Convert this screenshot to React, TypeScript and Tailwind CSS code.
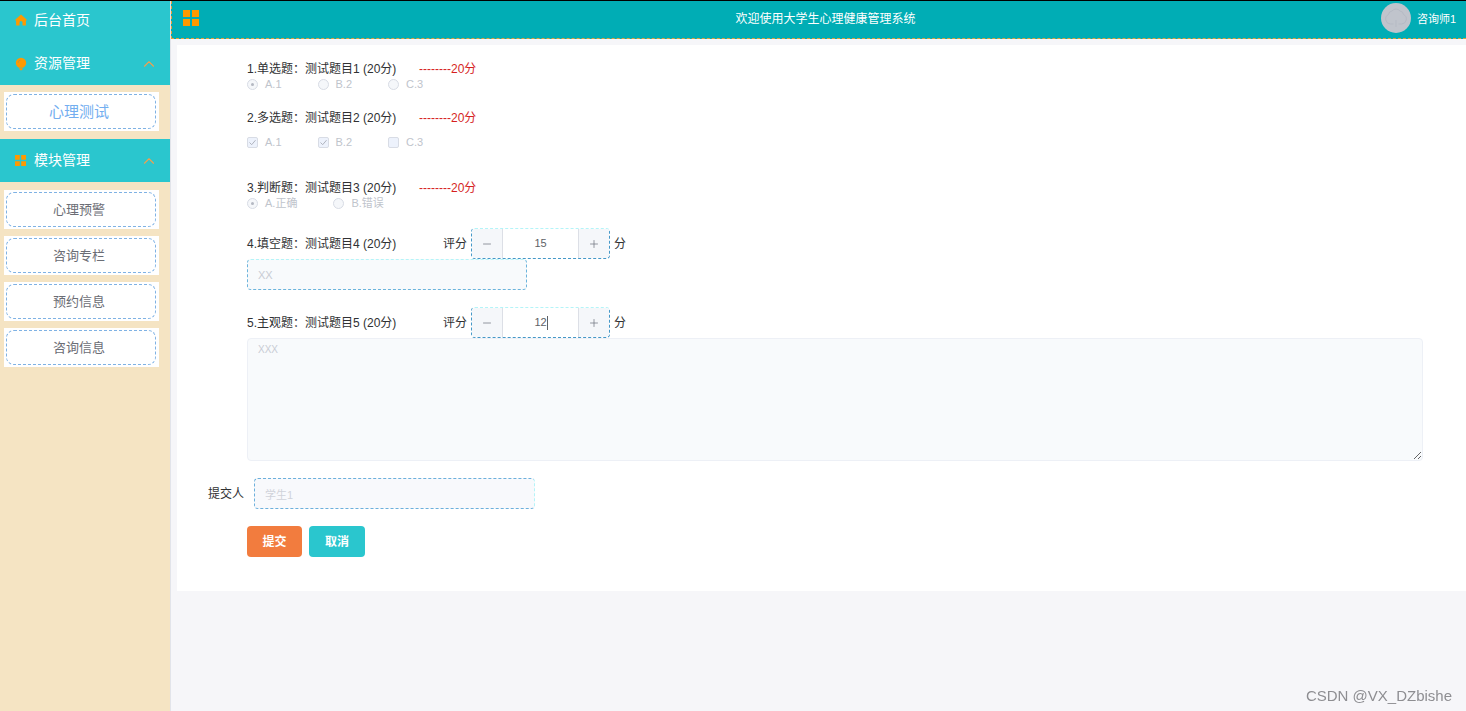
import React, { useState } from 'react';
import { ChevronUp, Minus, Plus } from 'lucide-react';

interface Question {
  id: number;
  type: 'single' | 'multiple' | 'judge' | 'blank' | 'essay';
  title: string;
  score?: number;
  options?: string[];
  checked?: string[];
  answer?: string;
}

const questions: Question[] = [
  { id: 1, type: 'single', title: '1.单选题：测试题目1 (20分)', score: 20, options: ['A.1', 'B.2', 'C.3'], checked: ['A.1'] },
  { id: 2, type: 'multiple', title: '2.多选题：测试题目2 (20分)', score: 20, options: ['A.1', 'B.2', 'C.3'], checked: ['A.1', 'B.2'] },
  { id: 3, type: 'judge', title: '3.判断题：测试题目3 (20分)', score: 20, options: ['A.正确', 'B.错误'], checked: ['A.正确'] },
  { id: 4, type: 'blank', title: '4.填空题：测试题目4 (20分)', answer: 'XX' },
  { id: 5, type: 'essay', title: '5.主观题：测试题目5 (20分)', answer: 'XXX' },
];

const HomeIcon = () => (
  <svg viewBox="0 0 12 12" className="w-3 h-3" fill="#ff9900">
    <path d="M6 .4 11.6 5.4v1H10.9V11.6H7.5V8.6a1.5 1.5 0 0 0-3 0v3H1.1V6.4H.4v-1z" />
  </svg>
);

const BulbIcon = () => (
  <svg viewBox="0 0 12 14" className="w-3 h-3.5" fill="#ff9900">
    <path d="M6 .8a5.200 5.200 0 0 1 5.200 5.200c0 2.200-1.500 3.800-3.200 4.800H4C2.300 9.800.8 8.200.8 6A5.200 5.200 0 0 1 6 .8z" />
    <path d="M4 11.200h4L6.800 13.200H5.200z" />
    <path d="M3 6a3 3 0 0 1 2.600-3" fill="none" stroke="#c9903a" strokeWidth=".9" />
  </svg>
);

const GridIcon = ({ className }: { className: string }) => (
  <svg viewBox="0 0 16 16" className={className} fill="#ff9900">
    <path d="M0 0h7v7H0zM9 0h7v7H9zM0 9h7v7H0zM9 9h7v7H9z" />
  </svg>
);

const Avatar = () => (
  <svg viewBox="0 0 30 30" className="w-[30px] h-[30px]">
    <circle cx="15" cy="15" r="15" fill="#c0c4cc" />
    <path
      d="M12.500 21H9.500a5 5 0 0 1-2-9.500 4 4 0 0 1 3.500-3.500 5 5 0 0 1 8 0 4 4 0 0 1 3.500 3.500 5 5 0 0 1-2 9.500h-3M15 17v7"
      fill="none"
      stroke="#b5bac4"
      strokeWidth="1"
    />
  </svg>
);

const MenuGroup = ({ icon, label }: { icon: React.ReactNode; label: string }) => (
  <button className="flex w-full h-[43px] items-center bg-[#2ac6ce] pl-[15px] pr-3.5 text-sm text-white">
    <span className="w-[19px]">{icon}</span>
    <span className="flex-1 pb-0.5 text-left">{label}</span>
    <ChevronUp className="w-[18px] h-[18px] -mr-0.5 text-[#f0a050]" strokeWidth={1.5} />
  </button>
);

const MenuItem = ({ label, active }: { label: string; active?: boolean }) => (
  <li className="bg-white p-0.5 pr-[3px]">
    <a
      href="#"
      className={`flex h-[35px] items-center justify-center rounded-lg border border-dashed border-[#7fb2e4] pr-1 ${
        active ? 'pt-0.5 text-[15px] text-[#73aef0]' : 'text-[13px] text-[#6b6d75]'
      }`}
    >
      {label}
    </a>
  </li>
);

const Options = ({ question }: { question: Question }) => {
  const multiple = question.type === 'multiple';
  return (
    <div className={multiple ? 'flex gap-9 mt-[9px] mb-3' : 'flex gap-9'}>
      {question.options?.map(option => {
        const checked = question.checked?.includes(option);
        return (
          <label key={option} className="flex h-4 items-center gap-[7px] text-[11px] text-[#c0c4cc]">
            <span className="relative flex w-[11px] h-[11px]">
              <input
                type={multiple ? 'checkbox' : 'radio'}
                name={`question-${question.id}`}
                defaultChecked={checked}
                disabled
                className={`appearance-none w-[11px] h-[11px] border border-[#d8dce5] ${
                  multiple ? 'rounded-xs bg-[#edf2fc]' : 'rounded-full bg-[#f5f7fa]'
                }`}
              />
              {checked && multiple && (
                <svg viewBox="0 0 11 11" className="absolute inset-0" fill="none" stroke="#b0b4be">
                  <path d="M2.500 5.500 4.700 7.700 8.500 3.200" />
                </svg>
              )}
              {checked && !multiple && (
                <span className="absolute inset-1 rounded-full bg-[#b4b8c2]" />
              )}
            </span>
            {option}
          </label>
        );
      })}
    </div>
  );
};

interface StepperProps {
  id: string;
  value: number;
  focused?: boolean;
  onChange: (value: number) => void;
}

const Stepper = ({ id, value, focused, onChange }: StepperProps) => (
  <div className="relative flex w-[139px] h-[31px] rounded-sm border border-dashed border-[#4598c8] border-t-[#b4f4f8] bg-white overflow-hidden">
    <button
      type="button"
      aria-label="减少"
      onClick={() => onChange(value - 1)}
      className="flex w-[31px] items-center justify-center border-r border-[#dcdfe6] bg-[#f5f7fa] text-[#707580]"
    >
      <Minus className="w-3 h-3" strokeWidth={1.5} />
    </button>
    <input
      id={id}
      value={value}
      onChange={e => onChange(Number(e.target.value) || 0)}
      className="flex-1 min-w-0 text-center text-[11px] text-[#606266] outline-none"
    />
    {focused && <span className="absolute left-1/2 top-2 ml-1.5 w-px h-3.5 bg-[#606266]" />}
    <button
      type="button"
      aria-label="增加"
      onClick={() => onChange(value + 1)}
      className="flex w-[31px] items-center justify-center border-l border-[#dcdfe6] bg-[#f5f7fa] text-[#707580]"
    >
      <Plus className="w-3 h-3" strokeWidth={1.5} />
    </button>
  </div>
);

const App = () => {
  const [scores, setScores] = useState<Record<number, number>>({ 4: 15, 5: 12 });

  return (
    <div className="flex min-h-screen border-t border-black bg-[#f6f6f9] font-['Liberation_Sans','Noto_Sans_CJK_SC',sans-serif]">
      {/* Sidebar */}
      <nav className="w-[171px] shrink-0 border-r border-[#e2e4ea] bg-[#f5e4c3]">
        <a href="#" className="flex h-[41px] items-center bg-[#2ac6ce] pb-[3px] pl-[15px] text-sm text-white">
          <span className="w-[19px]"><HomeIcon /></span>
          后台首页
        </a>
        <MenuGroup icon={<BulbIcon />} label="资源管理" />
        <ul className="mt-[7px] mb-2 ml-1 mr-[11px]">
          <MenuItem label="心理测试" active />
        </ul>
        <MenuGroup icon={<GridIcon className="w-[11px] h-[11px]" />} label="模块管理" />
        <ul className="flex flex-col gap-[7px] my-2 ml-1 mr-[11px]">
          <MenuItem label="心理预警" />
          <MenuItem label="咨询专栏" />
          <MenuItem label="预约信息" />
          <MenuItem label="咨询信息" />
        </ul>
      </nav>

      <div className="flex flex-1 min-w-0 flex-col">
        {/* Top bar */}
        <header className="flex h-[38px] items-center border-b border-l border-dashed border-[#e0a03c] bg-[#00adb5] pl-[11px] pr-2.5 text-white">
          <div className="flex-1 pb-1">
            <button aria-label="折叠菜单" className="flex"><GridIcon className="w-4 h-4" /></button>
          </div>
          <h1 className="pb-0.5 pl-3 text-xs">欢迎使用大学生心理健康管理系统</h1>
          <div className="flex flex-1 items-center justify-end gap-1.5 pb-1 text-[11px]">
            <Avatar />
            <span className="pt-1">咨询师1</span>
          </div>
        </header>

        <main className="mt-1.5 ml-1.5 bg-white pt-[15px] pb-[34px] pl-[70px] pr-[43px] text-xs text-[#303133]">
          <form className="flex flex-col gap-[17px]" onSubmit={e => e.preventDefault()}>
            {questions.map(question => (
              <section key={question.id}>
                {question.options ? (
                  <>
                    <div className="flex h-4 items-center gap-[18px] pt-0.5">
                      <span className="w-[154px] whitespace-nowrap">{question.title}</span>
                      <span className="text-[#d61f1f]">--------{question.score}分</span>
                    </div>
                    <Options question={question} />
                  </>
                ) : (
                  <>
                    <div className="flex items-center gap-1">
                      <span className="w-48 whitespace-nowrap">{question.title}</span>
                      <label htmlFor={`score-${question.id}`}>评分</label>
                      <Stepper
                        id={`score-${question.id}`}
                        value={scores[question.id]}
                        focused={question.type === 'essay'}
                        onChange={value => setScores({ ...scores, [question.id]: value })}
                      />
                      <span>分</span>
                    </div>
                    {question.type === 'blank' ? (
                      <input
                        aria-label={question.title}
                        value={question.answer}
                        disabled
                        className="block w-[280px] h-[31px] rounded-sm border border-dashed border-[#6cb4dc] border-t-[#b4f4f8] bg-[#f8fafc] px-2.5 text-[11px] text-[#c8ccd4]"
                      />
                    ) : (
                      <textarea
                        aria-label={question.title}
                        value={question.answer}
                        disabled
                        className="block w-full h-[123px] resize-y rounded-sm border border-[#edf0f6] bg-[#f8fafc] px-2.5 py-1 text-[10px] text-[#c8ccd4]"
                      />
                    )}
                  </>
                )}
              </section>
            ))}

            <div className="flex items-center gap-2 -ml-[39px]">
              <label htmlFor="submitter" className="w-[38px] whitespace-nowrap">提交人</label>
              <input
                id="submitter"
                value="学生1"
                disabled
                className="w-[281px] h-[31px] rounded-sm border border-dashed border-[#6cb0dc] border-r-[#b4f4f8] bg-[#f8f9fc] px-2.5 text-[11px] text-[#d0d3da]"
              />
            </div>

            <div className="flex gap-[7px]">
              <button type="submit" className="w-[55px] h-[31px] rounded-sm bg-[#f27c3e] text-xs font-bold text-white">
                提交
              </button>
              <button type="button" className="w-14 h-[31px] rounded-sm bg-[#2ac6ce] text-xs font-bold text-white">
                取消
              </button>
            </div>
          </form>
        </main>
      </div>

      <div className="fixed right-3.5 bottom-1 text-[15px] text-[#8e8e92]">CSDN @VX_DZbishe</div>
    </div>
  );
};

export default App;
